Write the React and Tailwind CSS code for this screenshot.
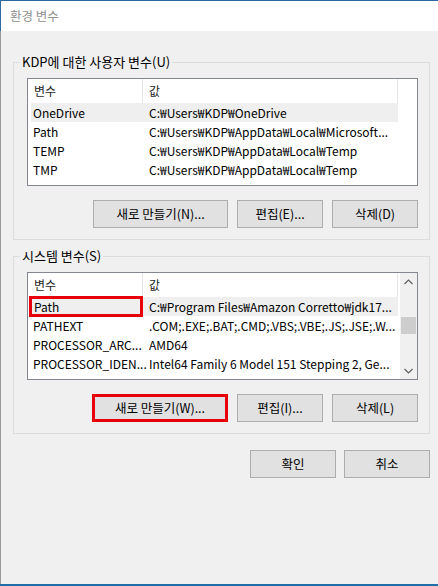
import React from 'react';

const FONT = { fontFamily: '"Noto Sans CJK KR", "Noto Sans", sans-serif' };

const USER_VARS = [
  { name: 'OneDrive', value: 'C:₩Users₩KDP₩OneDrive', selected: true },
  { name: 'Path', value: 'C:₩Users₩KDP₩AppData₩Local₩Microsoft...' },
  { name: 'TEMP', value: 'C:₩Users₩KDP₩AppData₩Local₩Temp' },
  { name: 'TMP', value: 'C:₩Users₩KDP₩AppData₩Local₩Temp' },
];

const SYSTEM_VARS = [
  { name: 'Path', value: 'C:₩Program Files₩Amazon Corretto₩jdk17...', selected: true, marked: true },
  { name: 'PATHEXT', value: '.COM;.EXE;.BAT;.CMD;.VBS;.VBE;.JS;.JSE;.W...' },
  { name: 'PROCESSOR_ARC...', value: 'AMD64' },
  { name: 'PROCESSOR_IDEN...', value: 'Intel64 Family 6 Model 151 Stepping 2, Ge...' },
];

function Button({ children, width = 'w-[86px]', marked = false }) {
  return (
    <button
      className={`h-[28px] ${width} bg-[#e1e1e1] text-[12.5px] leading-none text-black ${
        marked ? 'border-[3px] border-[#e8000b]' : 'border border-[#adadad]'
      }`}
    >
      {children}
    </button>
  );
}

function VarList({ rows, scrollbar = false }) {
  return (
    <div className="h-[108px] border border-[#828790] bg-white flex">
      <div className="flex-1 flex flex-col min-w-0">
        {/* Header */}
        <div className="h-[24px] flex text-[12px] text-[#1e1e1e]">
          <div className="w-[115px] pl-[6px] flex items-center border-r border-[#e5e5e5]">변수</div>
          <div className="w-[255px] pl-[6px] flex items-center border-r border-[#e5e5e5]">값</div>
        </div>
        {rows.map((r) => (
          <div key={r.name} className="h-[19px] flex pl-[3px]">
            <div
              className={`w-[367px] flex text-[12px] leading-[19px] text-black whitespace-nowrap ${
                r.selected ? 'bg-[#efefef]' : ''
              }`}
            >
              <div
                className={`w-[112px] pl-[2px] ${
                  r.marked ? 'border-[3px] border-[#e8000b] -ml-[2px] pl-[1px] leading-[15px] w-[114px] -my-[1px] h-[21px]' : ''
                }`}
              >
                {r.name}
              </div>
              <div className={`pl-[6px] overflow-hidden ${r.marked ? 'pl-[5px]' : ''}`}>{r.value}</div>
            </div>
          </div>
        ))}
      </div>
      {scrollbar && (
        <div className="w-[17px] bg-[#f0f0f0] flex flex-col items-center">
          <div className="h-[17px] w-full flex items-center justify-center">
            <svg width="9" height="6" viewBox="0 0 9 6">
              <path d="M0.5 5 L4.5 1 L8.5 5" fill="none" stroke="#606060" strokeWidth="1.2" />
            </svg>
          </div>
          <div className="h-[27px]" />
          <div className="h-[17px] w-[15px] bg-[#cdcdcd]" />
          <div className="flex-1" />
          <div className="h-[17px] w-full flex items-center justify-center">
            <svg width="9" height="6" viewBox="0 0 9 6">
              <path d="M0.5 1 L4.5 5 L8.5 1" fill="none" stroke="#606060" strokeWidth="1.2" />
            </svg>
          </div>
        </div>
      )}
    </div>
  );
}

function Group({ label, children }) {
  return (
    <fieldset className="w-[417px] border border-[#dcdcdc] pl-[13px] pr-[11px] pt-[8px] pb-[11px]">
      <legend className="-ml-[7px] px-[2px] text-[13px] leading-[16px] text-black">{label}</legend>
      {children}
    </fieldset>
  );
}

export default function App() {
  return (
    <div className="w-[438px] h-[586px] flex flex-col bg-[#f0f0f0]" style={FONT}>
      {/* Title bar */}
      <div className="h-[31px] bg-white border-t border-l border-[#2b6aa3] flex items-center pl-[9px]">
        <span className="text-[12.5px] text-[#8f8f8f]">환경 변수</span>
      </div>

      <div className="flex-1 border-l border-[#9a9a9a] pl-[12px] pt-[23px] flex flex-col">
        <Group label="KDP에 대한 사용자 변수(U)">
          <VarList rows={USER_VARS} />
          <div className="mt-[14px] flex justify-end gap-[9px]">
            <Button width="w-[135px]">새로 만들기(N)...</Button>
            <Button>편집(E)...</Button>
            <Button>삭제(D)</Button>
          </div>
        </Group>

        <div className="mt-[8px]">
          <Group label="시스템 변수(S)">
            <VarList rows={SYSTEM_VARS} scrollbar />
            <div className="mt-[14px] flex justify-end gap-[9px]">
              <Button width="w-[136px]" marked>
                새로 만들기(W)...
              </Button>
              <Button>편집(I)...</Button>
              <Button>삭제(L)</Button>
            </div>
          </Group>
        </div>

        <div className="w-[417px] mt-[16px] flex justify-end gap-[8px]">
          <Button>확인</Button>
          <Button>취소</Button>
        </div>
      </div>

      <div className="h-[2px] bg-[#1e6fa8]" />
    </div>
  );
}
